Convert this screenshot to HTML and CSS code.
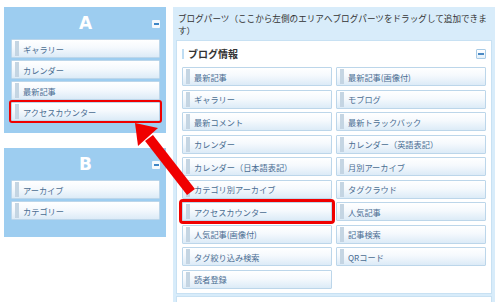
FILE: index.html
```html
<!DOCTYPE html>
<html lang="ja">
<head>
    <meta charset="UTF-8">
    <title>ブログパーツ設定</title>
    <link rel="stylesheet" href="styles.css">
</head>
<body>
    <div class="layout">
        <!-- 左側のエリア -->
        <div class="side">
            <div class="area area-a">
                <div class="area-head">
                    <span class="area-name">A</span>
                    <span class="toggle"></span>
                </div>
                <div class="part">ギャラリー</div>
                <div class="part">カレンダー</div>
                <div class="part">最新記事</div>
                <div class="part part-mark">アクセスカウンター</div>
            </div>

            <div class="area area-b">
                <div class="area-head">
                    <span class="area-name">B</span>
                    <span class="toggle"></span>
                </div>
                <div class="part">アーカイブ</div>
                <div class="part">カテゴリー</div>
            </div>
        </div>

        <!-- ブログパーツ一覧 -->
        <div class="pool">
            <p class="pool-note">ブログパーツ（ここから左側のエリアへブログパーツをドラッグして追加できます）</p>
            <div class="group">
                <div class="group-head">
                    <h2>ブログ情報</h2>
                    <span class="toggle toggle-big"></span>
                </div>
                <div class="grid">
                    <div class="part">最新記事</div>
                    <div class="part">最新記事(画像付)</div>
                    <div class="part">ギャラリー</div>
                    <div class="part">モブログ</div>
                    <div class="part">最新コメント</div>
                    <div class="part">最新トラックバック</div>
                    <div class="part">カレンダー</div>
                    <div class="part">カレンダー（英語表記）</div>
                    <div class="part">カレンダー（日本語表記）</div>
                    <div class="part">月別アーカイブ</div>
                    <div class="part">カテゴリ別アーカイブ</div>
                    <div class="part">タグクラウド</div>
                    <div class="part part-mark part-mark-big">アクセスカウンター</div>
                    <div class="part">人気記事</div>
                    <div class="part">人気記事(画像付)</div>
                    <div class="part">記事検索</div>
                    <div class="part">タグ絞り込み検索</div>
                    <div class="part">QRコード</div>
                    <div class="part">読者登録</div>
                </div>
            </div>
            <div class="group group-next"></div>
        </div>
    </div>

    <!-- ドラッグの矢印 -->
    <svg class="arrow" width="500" height="302" viewBox="0 0 500 302">
        <line x1="149" y1="138" x2="191" y2="192" stroke="#f00000" stroke-width="10" />
        <polygon points="135,123 158,128 138,146" fill="#f00000" />
    </svg>
</body>
</html>
```

FILE: styles.css
```css
body {
    margin: 0;
    background: #fff;
    font-family: "Noto Sans CJK JP", "Noto Sans", sans-serif;
    color: #333;
}
.layout {
    display: flex;
    align-items: flex-start;
    gap: 7px;
    padding: 7px 0 0 4px;
}
.side {
    width: 162px;
    display: flex;
    flex-direction: column;
    gap: 15px;
}
.area {
    background: #9dcdf0;
    padding: 0 6px 0 7px;
    display: flex;
    flex-direction: column;
    gap: 2px;
}
.area-a {
    height: 126px;
    box-sizing: border-box;
}
.area-b {
    height: 89px;
    box-sizing: border-box;
}
.area-head {
    height: 30px;
    display: grid;
    grid-template-columns: 1fr auto 1fr;
    align-items: center;
}
.area-name {
    grid-column: 2;
    color: #fff;
    font-family: "DejaVu Sans", sans-serif;
    font-weight: bold;
    font-size: 17px;
    line-height: 1;
    padding-top: 2px;
}
.toggle {
    grid-column: 3;
    justify-self: end;
    width: 8px;
    height: 8px;
    background: #f4f9fd;
    border-radius: 1px;
    display: flex;
    align-items: center;
    justify-content: center;
    margin-top: 3px;
}
.toggle::after {
    content: "";
    width: 5px;
    height: 2px;
    background: #3d86c6;
}
.part {
    height: 19px;
    box-sizing: border-box;
    border: 1px solid #bcd6ea;
    border-radius: 1px;
    background: linear-gradient(to bottom, #ffffff 0%, #f5f9fd 45%, #dcebf7 100%);
    display: flex;
    align-items: center;
    gap: 4px;
    padding-left: 3px;
    font-size: 8.2px;
    color: #4a6d92;
    white-space: nowrap;
}
.part::before {
    content: "";
    width: 4px;
    height: 15px;
    flex: none;
    background-image: radial-gradient(circle, #c3d4e2 0.7px, transparent 0.9px);
    background-size: 2px 2px;
}
.part-mark {
    outline: 2px solid #f00000;
}
.part-mark-big {
    outline-width: 3px;
}
.pool {
    width: 322px;
    background: #d8ecfa;
    padding: 0 3px;
    box-sizing: border-box;
}
.pool-note {
    margin: 0;
    height: 33px;
    box-sizing: border-box;
    padding: 5px 0 0 2px;
    font-size: 8.6px;
    line-height: 12px;
}
.group {
    background: #fff;
    border: 1px solid #c8e1f3;
    padding: 0 5px 4px 5px;
    margin-bottom: 2px;
}
.group-head {
    height: 26px;
    display: flex;
    align-items: center;
    justify-content: space-between;
}
.group-head h2 {
    margin: 0;
    font-size: 10px;
    font-weight: bold;
    line-height: 10px;
    border-left: 2px solid #bfddf3;
    padding-left: 4px;
    color: #333;
}
.toggle-big {
    width: 8px;
    height: 8px;
    border: 1px solid #a8cbe6;
    background: linear-gradient(to bottom, #ffffff, #e3f0fa);
    margin: 0;
}
.toggle-big::after {
    width: 6px;
    background: #4b8ac4;
}
.grid {
    display: grid;
    grid-template-columns: 150px 150px;
    column-gap: 4px;
    row-gap: 3.5px;
}
.group-next {
    height: 10px;
    padding: 0;
    margin: 0;
}
.arrow {
    position: absolute;
    left: 0;
    top: 0;
    pointer-events: none;
}
```
